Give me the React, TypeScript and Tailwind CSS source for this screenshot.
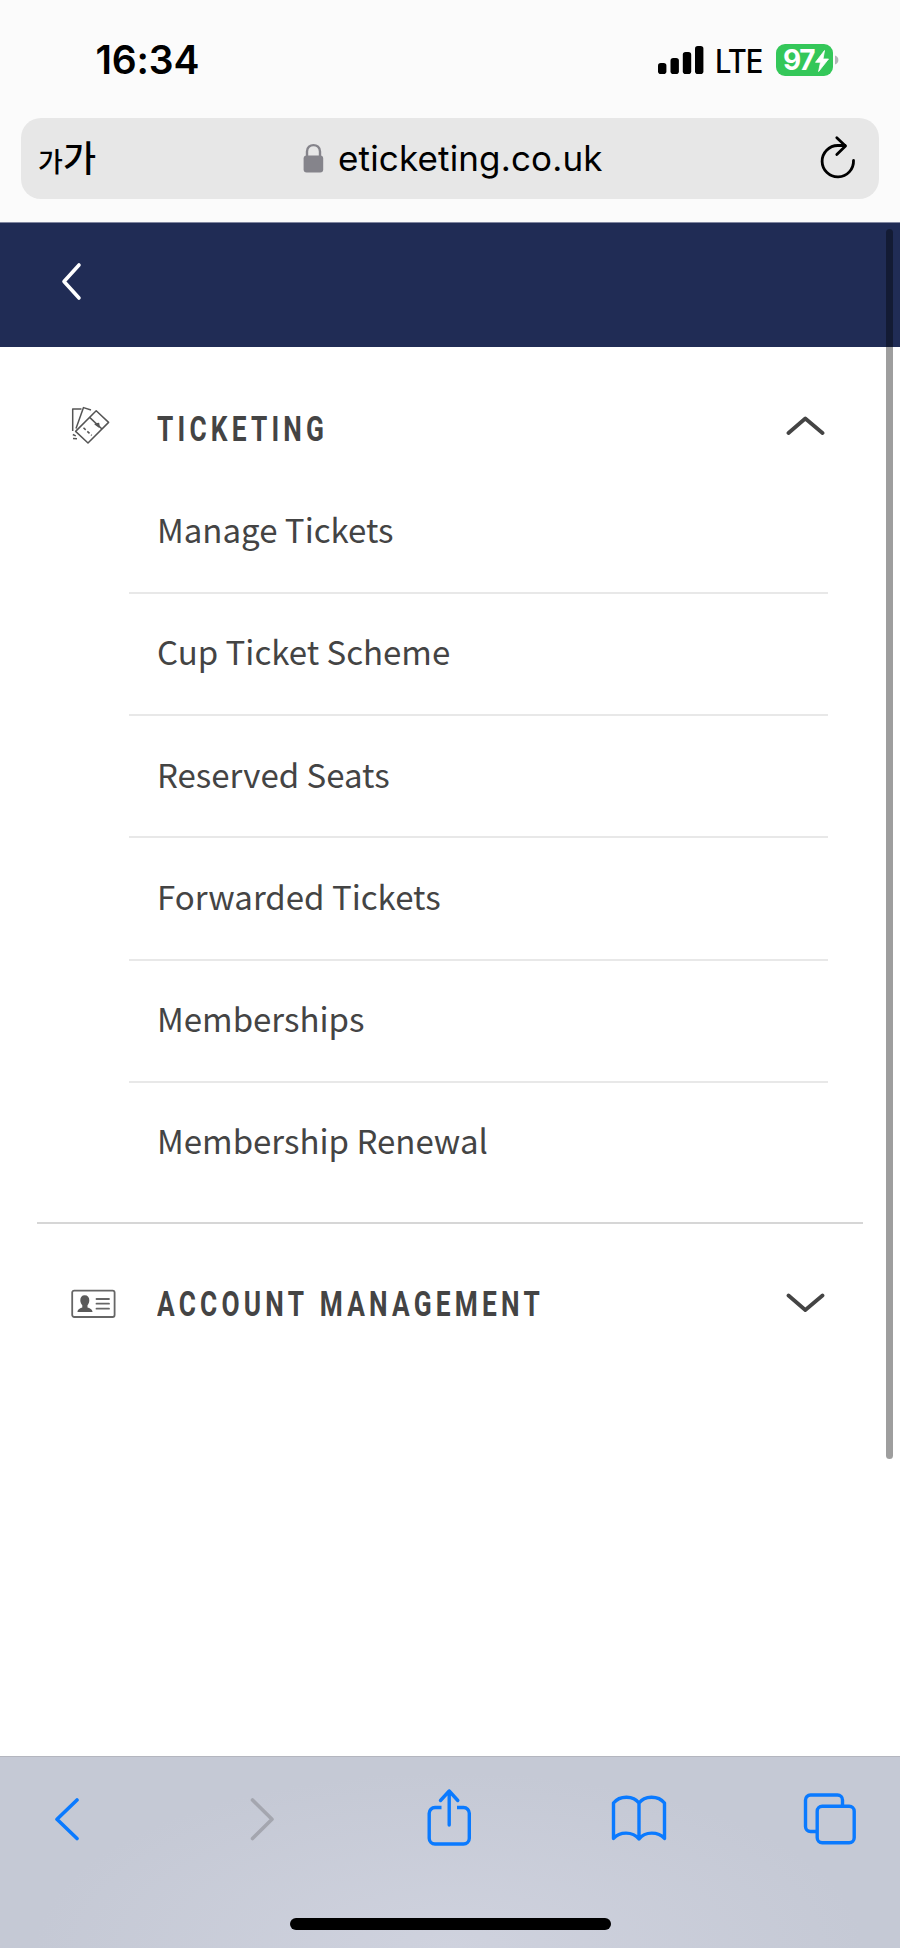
import { useState } from "react"

const links: string[] = [
    "Manage Tickets",
    "Cup Ticket Scheme",
    "Reserved Seats",
    "Forwarded Tickets",
    "Memberships",
    "Membership Renewal",
]

function StatusBar() {
    return (
        <div className="h-[118px] flex items-start pl-[95.5px] pr-[61px]">
            <span className="mt-[36px] text-[39px] leading-[48px] font-semibold tracking-[-0.2px]">16:34</span>
            <div className="ml-auto mt-[43px] flex items-center h-[34px]">
                <svg width="46" height="30" viewBox="0 0 46 30">
                    <rect x="0" y="18" width="8.4" height="11" rx="2.8" />
                    <rect x="12.5" y="13" width="8.4" height="16" rx="2.8" />
                    <rect x="24.8" y="7" width="8.4" height="22" rx="2.8" />
                    <rect x="37" y="1" width="8.4" height="28" rx="2.8" />
                </svg>
                <span className="ml-[11px] mt-[3px] w-[61px] origin-left scale-x-[0.91] text-[32px] leading-[34px] font-medium tracking-[-1.1px]">LTE</span>
                <div className="w-[57px] h-[32px] rounded-[9px] bg-[#34c759] flex items-center pl-[7px]">
                    <span className="w-[32px] text-[28px] leading-[32px] font-bold text-white tracking-[-1.4px]">97</span>
                    <svg width="14" height="22" viewBox="0 0 14 22" className="mt-px shrink-0">
                        <path d="M9.5 0.5 0.5 12.3h5L3.6 21.5 13.5 9H8z" fill="#fff" stroke="#fff" strokeWidth="0.8" strokeLinejoin="round" />
                    </svg>
                </div>
                <svg width="4" height="10" viewBox="0 0 4 10" className="ml-[2px]">
                    <path d="M0 0.5C4.5 1.5 4.5 8.5 0 9.5z" fill="#b5b5b8" />
                </svg>
            </div>
        </div>
    )
}

function AddressBar() {
    return (
        <div className="mx-[21px] h-[81px] rounded-[20px] bg-[#e7e7e7] flex items-center">
            <div className="w-[282px] pl-[17px] flex items-baseline font-['Noto_Sans_CJK_KR',sans-serif]">
                <span className="text-[27px] leading-[60px] w-[25px] font-medium">가</span>
                <span className="text-[36px] leading-[60px] font-medium">가</span>
            </div>
            <svg width="21" height="30" viewBox="0 0 21 30" className="-mt-[2px]">
                <path d="M4 14V8.5C4 0 17 0 17 8.5V14" fill="none" stroke="#85848b" strokeWidth="2.4" />
                <rect x="0.6" y="12.5" width="19.6" height="17" rx="3" fill="#85848b" />
            </svg>
            <span className="ml-[14px] -mt-px text-[35px] leading-[48px] tracking-[0.15px] whitespace-nowrap">eticketing.co.uk</span>
            <svg width="36" height="44" viewBox="0 0 36 44" className="ml-auto mr-[23px] -mt-[4px]" fill="none" stroke="#000" strokeWidth="2.8" strokeLinecap="round" strokeLinejoin="round">
                <path d="M33.5 25.5A15.7 15.7 0 1 1 17.8 10.5H25" />
                <path d="M16.8 2.8 25.5 11 16.8 19.5" />
            </svg>
        </div>
    )
}

function TicketIcon() {
    return (
        <svg width="40" height="40" viewBox="0 0 40 40" className="ml-px -mt-[2px]" fill="none" stroke="#555" strokeWidth="1.5" strokeLinejoin="round">
            <path d="M25.2 4.8 37.6 16.4 17 37 4.6 25.4z" />
            <path d="M18.6 11.4 31 23" />
            <path d="M24.2 18.2l3.4-.6.4 3.4z" fill="#555" />
            <path d="M12.5 21.8l8.2 7.6" strokeDasharray="3 2.2" />
            <path d="M20 4 12.5 1.6 5 22.4" />
            <path d="M10.5 3H1.7V25" />
            <path d="M1.8 28.5l3 1.4M2 32.5l4 .3" />
        </svg>
    )
}

function CardIcon() {
    return (
        <svg width="46" height="30" viewBox="0 0 46 30" className="ml-px mt-[4px]">
            <rect x="1.2" y="1.6" width="42.4" height="26.4" rx="2" fill="none" stroke="#666" strokeWidth="1.8" />
            <path d="M13.7 6.3c3 0 4.7 2 4.6 5 0 2-.7 3.8-1.8 5v2.2c2 .7 5 1.6 5 4.5H6.5c0-2.9 3-3.8 4.8-4.5v-2.2c-1.1-1.2-2-3-2-5 0-3 1.5-5 4.4-5z" fill="#5a5a5a" />
            <path d="M25.5 10h12.5M25.5 14.7h12.5M25.5 19.7h12.5" stroke="#666" strokeWidth="1.8" strokeLinecap="round" />
        </svg>
    )
}

function Heading({ text, open, onClick, icon }: { text: string, open: boolean, onClick: () => void, icon: React.ReactNode }) {
    return (
        <button onClick={onClick} className="w-full h-[60px] pl-[70px] pr-[75px] flex items-center text-left">
            <span className="w-[87px]">{icon}</span>
            <span className="flex-1 w-0 whitespace-nowrap origin-left scale-x-[0.74] pt-[4px] font-['Roboto',sans-serif] text-[35.5px] leading-[42px] font-bold tracking-[5.7px] [word-spacing:2px] text-[#444]">{text}</span>
            <svg width="40" height="22" viewBox="0 0 40 22" className={open ? "-mt-[2px]" : "mt-[2px]"} fill="none" stroke="#444" strokeWidth="3.8" strokeLinecap="round" strokeLinejoin="round">
                <path d={open ? "M3.5 18 20.3 3.5 37.5 18" : "M3.5 3.5 20.3 18 37.5 3.5"} />
            </svg>
        </button>
    )
}

function Toolbar() {
    return (
        <div className="h-[192px] border-t border-[#b4b6bf] bg-[radial-gradient(ellipse_at_50%_100%,#cfd2de_0%,#c5c9d5_65%)] flex flex-col">
            <div className="h-[124px] flex items-center text-[#0a7aff]">
                <svg width="26" height="44" viewBox="0 0 26 44" className="ml-[53px]" fill="none" stroke="currentColor" strokeWidth="3.6" strokeLinecap="round" strokeLinejoin="round">
                    <path d="M24 3 4 22.3 24 41.5" />
                </svg>
                <svg width="26" height="44" viewBox="0 0 26 44" className="ml-[169px]" fill="none" stroke="#a4a6af" strokeWidth="3.6" strokeLinecap="round" strokeLinejoin="round">
                    <path d="M4.5 3 24 22.3 4.5 41.5" />
                </svg>
                <svg width="46" height="58" viewBox="0 0 46 58" className="ml-[152px] -mt-[4px]" fill="none" stroke="currentColor" strokeWidth="3.4" strokeLinecap="round" strokeLinejoin="round">
                    <path d="M15.5 19.5H9a5.8 5.8 0 0 0-5.8 5.8V50.2A5.8 5.8 0 0 0 9 56H37.5a5.8 5.8 0 0 0 5.8-5.8V25.3a5.8 5.8 0 0 0-5.8-5.8H31" strokeLinecap="butt" />
                    <path d="M23.2 37V3M14.5 12.5 23.2 3 31.8 12.5" />
                </svg>
                <svg width="56" height="48" viewBox="0 0 56 48" className="ml-[139px] -mt-[2px]" fill="none" stroke="currentColor" strokeWidth="3.4" strokeLinecap="round" strokeLinejoin="round">
                    <path d="M28 9C22.5 1.5 9 1 2.5 9V44.5C8.5 37.5 21.5 37 28 45 34 37 47.5 37.5 53.5 44.5V9C47 1 33.5 1.5 28 9zV45" />
                </svg>
                <svg width="54" height="52" viewBox="0 0 54 52" className="ml-[136px]" fill="none" stroke="currentColor" strokeWidth="3.4">
                    <rect x="14.2" y="13.2" width="37" height="36.5" rx="5" />
                    <path d="M14 38.5H7.5a5 5 0 0 1-5-5V7a5 5 0 0 1 5-5H34.5a5 5 0 0 1 5 5v6" />
                </svg>
            </div>
            <div className="mt-[37px] mx-auto w-[321px] h-[12px] rounded-full bg-black" />
        </div>
    )
}

export default function App() {

    const [ticketing, setTicketing] = useState(true)
    const [account, setAccount] = useState(false)

    return (
        <div className="relative w-[900px] h-[1948px] bg-white font-['Inter',sans-serif] text-black flex flex-col overflow-hidden">
            <div className="h-[223px] bg-[#fbfbfb] border-b border-[#8086a0]">
                <StatusBar />
                <AddressBar />
            </div>
            <div className="h-[124px] bg-[#202c55] pl-[60px] pt-[39px]">
                <svg width="24" height="40" viewBox="0 0 24 40" fill="none" stroke="#fff" strokeWidth="3.6" strokeLinecap="round" strokeLinejoin="round">
                    <path d="M19 3 4 19.5 19 36" />
                </svg>
            </div>

            <main className="flex-1 pt-[50px]">
                <Heading text="TICKETING" open={ticketing} onClick={() => setTicketing((prev) => !prev)} icon={<TicketIcon />} />
                {ticketing && (
                    <ul className="ml-[129px] w-[699px] mt-[14.6px] font-['Noto_Sans_CJK_SC',sans-serif] text-[33px] text-[#444]">
                        {links.map((link) => (
                            <li key={link} className="h-[122.3px] pl-[28px] pb-[4px] flex items-center border-b-2 border-[#e8e8e8] last:border-transparent">
                                {link}
                            </li>
                        ))}
                    </ul>
                )}
                <hr className="mt-[16.4px] mx-[37px] border-t-2 border-[#d6d6d6]" />
                <div className="pt-[48px]">
                    <Heading text="ACCOUNT MANAGEMENT" open={account} onClick={() => setAccount((prev) => !prev)} icon={<CardIcon />} />
                </div>
            </main>

            <Toolbar />

            {/* overlay scrollbar */}
            <div className="absolute right-[7px] top-[229px] w-[7px] h-[1230px] rounded-full bg-black/38" />
        </div>
    )
}
